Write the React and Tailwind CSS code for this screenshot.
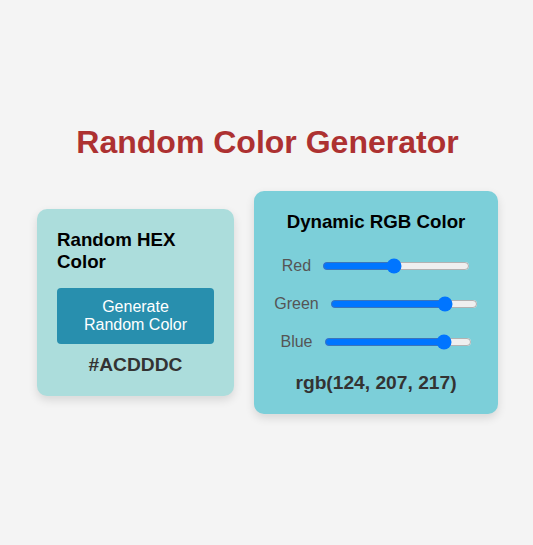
import React, { useState } from 'react';

const Slider = ({ label, value, onChange }) => (
  <div className="flex h-[22px] items-center justify-center">
    <label className="text-[16px] leading-[22px] text-[#555]">{label}</label>
    <input
      type="range"
      min="0"
      max="255"
      value={value}
      onChange={(e) => onChange(Number(e.target.value))}
      className="m-0 ml-[11px] w-[148px] accent-[#0075ff]"
    />
  </div>
);

const App = () => {
  const [hex] = useState('#ACDDDC');
  const [r, setR] = useState(124);
  const [g, setG] = useState(207);
  const [b, setB] = useState(217);

  return (
    <div
      className="min-h-screen bg-[#f4f4f4] pt-[124px] text-black"
      style={{ fontFamily: '"Liberation Sans", Arial, sans-serif' }}
    >
      {/* Title */}
      <h1 className="pl-[2px] text-center text-[32px] font-bold leading-[37px] text-[#ad3131]">
        Random Color Generator
      </h1>

      {/* Cards */}
      <div className="mt-[30px] flex items-center justify-center gap-[20px] pl-[2px]">
        <div className="w-[197px] rounded-[10px] bg-[#acdddc] p-[20px] shadow-[0_4px_10px_rgba(0,0,0,0.12)]">
          <h3 className="text-[18.72px] font-bold leading-[22px]">Random HEX Color</h3>
          <button className="mt-[15px] w-full rounded-[4px] bg-[#288fae] px-[20px] py-[10px] text-[16px] leading-[18px] text-white">
            Generate Random Color
          </button>
          <p className="mt-[10px] text-center text-[19.2px] font-bold leading-[22px] text-[#333]">{hex}</p>
        </div>

        <div className="w-[244px] rounded-[10px] bg-[#7ccfd9] p-[20px] shadow-[0_4px_10px_rgba(0,0,0,0.12)]">
          <h3 className="text-center text-[18.72px] font-bold leading-[22px]">Dynamic RGB Color</h3>
          <div className="mt-[22px] flex flex-col gap-[16px]">
            <Slider label="Red" value={r} onChange={setR} />
            <Slider label="Green" value={g} onChange={setG} />
            <Slider label="Blue" value={b} onChange={setB} />
          </div>
          <p className="mt-[19px] text-center text-[19.2px] font-bold leading-[22px] text-[#333]">
            rgb({r}, {g}, {b})
          </p>
        </div>
      </div>
    </div>
  );
};

export default App;
